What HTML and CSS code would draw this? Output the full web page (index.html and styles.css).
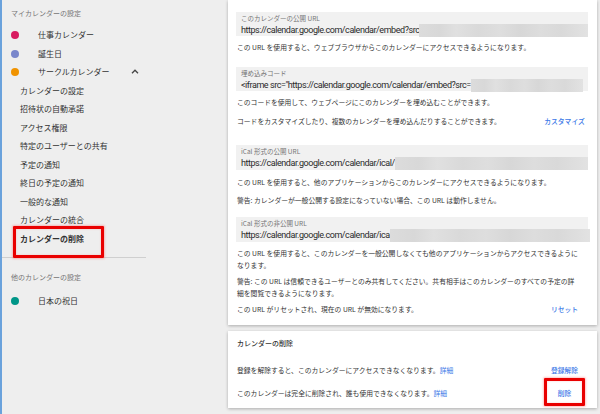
FILE: index.html
```html
<!DOCTYPE html>
<html lang="ja">
<head>
<meta charset="utf-8">
<title>カレンダーの設定</title>
<link rel="stylesheet" href="styles.css">
</head>
<body>
<div class="app">
  <aside class="sidebar">
    <div class="side-head">マイカレンダーの設定</div>
    <ul class="side-list">
      <li class="cal"><span class="dot pink"></span>仕事カレンダー</li>
      <li class="cal"><span class="dot purple"></span>誕生日</li>
      <li class="cal"><span class="dot orange"></span>サークルカレンダー<svg class="chev" width="8" height="5" viewBox="0 0 8 5"><path d="M1 4.2 L4 1.2 L7 4.2" fill="none" stroke="#444" stroke-width="1.3"/></svg></li>
      <li class="sub">カレンダーの設定</li>
      <li class="sub">招待状の自動承諾</li>
      <li class="sub">アクセス権限</li>
      <li class="sub">特定のユーザーとの共有</li>
      <li class="sub">予定の通知</li>
      <li class="sub">終日の予定の通知</li>
      <li class="sub">一般的な通知</li>
      <li class="sub">カレンダーの統合</li>
      <li class="sub current marked">カレンダーの削除</li>
    </ul>
    <hr class="divider">
    <div class="side-head second">他のカレンダーの設定</div>
    <ul class="side-list other">
      <li class="cal"><span class="dot teal"></span>日本の祝日</li>
    </ul>
  </aside>

  <main class="main">
    <section class="card card-urls">
      <div class="field f1">
        <div class="field-label">このカレンダーの公開 URL</div>
        <div class="field-value"><span class="url">https://calendar.google.com/calendar/embed?src</span><span class="blur"></span></div>
      </div>
      <p class="desc d1">この URL を使用すると、ウェブブラウザからこのカレンダーにアクセスできるようになります。</p>

      <div class="field f2">
        <div class="field-label">埋め込みコード</div>
        <div class="field-value"><span class="url">&lt;iframe src="https://calendar.google.com/calendar/embed?src=</span><span class="blur short"></span></div>
      </div>
      <p class="desc d2">このコードを使用して、ウェブページにこのカレンダーを埋め込むことができます。</p>
      <div class="row r1"><span class="desc-text">コードをカスタマイズしたり、複数のカレンダーを埋め込んだりすることができます。</span><span class="btn">カスタマイズ</span></div>

      <div class="field f3">
        <div class="field-label">iCal 形式の公開 URL</div>
        <div class="field-value"><span class="url">https://calendar.google.com/calendar/ical/</span><span class="blur"></span></div>
      </div>
      <p class="desc d3">この URL を使用すると、他のアプリケーションからこのカレンダーにアクセスできるようになります。</p>
      <p class="desc d4">警告: カレンダーが一般公開する設定になっていない場合、この URL は動作しません。</p>

      <div class="field f4">
        <div class="field-label">iCal 形式の非公開 URL</div>
        <div class="field-value"><span class="url">https://calendar.google.com/calendar/ica</span><span class="blur wide"></span></div>
      </div>
      <p class="desc multi d5">この URL を使用すると、このカレンダーを一般公開しなくても他のアプリケーションからアクセスできるように<br>なります。</p>
      <p class="desc multi d6">警告: この URL は信頼できるユーザーとのみ共有してください。共有相手はこのカレンダーのすべての予定の詳<br>細を閲覧できるようになります。</p>
      <div class="row r2"><span class="desc-text">この URL がリセットされ、現在の URL が無効になります。</span><span class="btn">リセット</span></div>
    </section>

    <section class="card card-delete">
      <h2 class="card-title">カレンダーの削除</h2>
      <div class="row r3"><span class="desc-text">登録を解除すると、このカレンダーにアクセスできなくなります。<a class="link">詳細</a></span><span class="btn">登録解除</span></div>
      <div class="row r4"><span class="desc-text">このカレンダーは完全に削除され、誰も使用できなくなります。<a class="link">詳細</a></span><span class="btn marked-btn">削除</span></div>
    </section>
  </main>
</div>
</body>
</html>
```

FILE: styles.css
```css
* { box-sizing: border-box; }

html, body {
  margin: 0;
  padding: 0;
  background: #eeeeee;
}

body {
  font-family: "Noto Sans CJK JP", "Noto Sans", sans-serif;
  color: #333333;
  width: 600px;
  height: 414px;
  overflow: hidden;
}

.app {
  display: flex;
  height: 414px;
}

/* ---------- Sidebar ---------- */
.sidebar {
  width: 228px;
  flex: 0 0 228px;
  border-left: 2px solid #6aa2dc;
  background: #eeeeee;
  height: 414px;
}

.side-head {
  font-size: 7px;
  line-height: 14px;
  color: #757575;
  padding: 6px 0 0 9px;
  height: 20px;
}

.side-head.second {
  padding-top: 0;
  height: 14px;
  margin-top: 12px;
}

.side-list {
  list-style: none;
  margin: 6px 0 0 0;
  padding: 0;
}

.side-list.other {
  margin-top: 8px;
}

.side-list li {
  font-size: 8px;
  line-height: 18.5px;
  height: 18.5px;
  color: #333333;
  white-space: nowrap;
}

.cal {
  display: flex;
  align-items: center;
  padding-left: 9px;
}

.dot {
  width: 8px;
  height: 8px;
  border-radius: 50%;
  margin-right: 19px;
  flex: 0 0 8px;
}
.dot.pink { background: #d81b60; }
.dot.purple { background: #7986cb; }
.dot.orange { background: #f09300; }
.dot.teal { background: #009688; }

.chev {
  margin-left: 21px;
  margin-top: -1px;
}

.sub {
  padding-left: 18px;
}

.sub.current {
  font-weight: 700;
}

.marked {
  position: relative;
}

.marked::after {
  content: "";
  position: absolute;
  left: 11px;
  top: -4px;
  width: 85px;
  height: 26px;
  border: 3px solid #e90000;
  border-radius: 1px;
  box-shadow: 0 0 2px 1px rgba(255, 90, 90, 0.35), inset 0 0 2px rgba(255, 90, 90, 0.35);
}

.divider {
  width: 144px;
  margin: 9px 0 0 0;
  border: 0;
  border-top: 1px solid #cfcfcf;
  height: 0;
}

/* ---------- Main ---------- */
.main {
  flex: 1;
  display: flex;
  flex-direction: column;
  gap: 6px;
  padding-right: 3px;
}

.card {
  background: #ffffff;
  box-shadow: 0 1px 3px rgba(0, 0, 0, 0.28);
  padding: 0 9px 0 8px;
}

.card-urls {
  padding-top: 12px;
  padding-bottom: 10px;
}

.card-delete {
  padding-top: 7px;
  padding-bottom: 9px;
}

.field {
  background: #f1f1f1;
  height: 24px;
  padding: 1px 0 0 5px;
}
.f3, .f4 { height: 25px; }

.field-label {
  font-size: 6.5px;
  line-height: 11px;
  color: #757575;
  white-space: nowrap;
}

.field-value {
  display: flex;
  align-items: center;
  height: 12px;
}

.url {
  font-family: Roboto, "Noto Sans CJK JP", sans-serif;
  font-size: 9px;
  letter-spacing: -0.45px;
  line-height: 12px;
  color: #2a2a2a;
  white-space: nowrap;
}

.blur {
  flex: 1;
  height: 13px;
  background: linear-gradient(90deg,
    #dcdcdc 0%, #d8d8d8 12%, #e0e0e0 22%, #d9d9d9 35%, #dedede 48%,
    #d7d7d7 60%, #dddddd 72%, #d9d9d9 84%, #e2e2e2 100%);
}
.blur.short { margin-right: 5px; }
.blur.wide { margin-right: -2px; }

.desc, .desc-text {
  font-size: 6.8px;
  line-height: 12px;
  color: #333333;
  white-space: nowrap;
}

.desc {
  margin: 0;
  padding-left: 1px;
}

.desc.multi { line-height: 11.5px; }

.d1 { margin-top: 5px; }
.f2 { margin-top: 14px; }
.d2 { margin-top: 5px; }
.r1 { margin-top: 7px; }
.f3 { margin-top: 18px; }
.d3 { margin-top: 6px; }
.d4 { margin-top: 6px; }
.f4 { margin-top: 11px; }
.d5 { margin-top: 6px; }
.d6 { margin-top: 5px; }
.r2 { margin-top: 4px; }

.row {
  display: flex;
  align-items: center;
  justify-content: space-between;
  height: 12px;
  padding-left: 1px;
  padding-right: 3px;
}

.btn {
  width: 41px;
  text-align: center;
  font-size: 6.8px;
  line-height: 12px;
  color: #3b78e7;
  font-weight: 500;
  white-space: nowrap;
}

.link {
  color: #3b78e7;
}

.card-title {
  margin: 0;
  padding-left: 1px;
  font-size: 7px;
  line-height: 10px;
  font-weight: 500;
  color: #333333;
}

.r3 { margin-top: 16px; }
.r4 { margin-top: 11px; }

.marked-btn {
  position: relative;
}

.marked-btn::after {
  content: "";
  position: absolute;
  left: 0;
  right: 0;
  top: -9px;
  bottom: -7px;
  border: 3px solid #e90000;
  border-radius: 1px;
  box-shadow: 0 0 2px 1px rgba(255, 90, 90, 0.35), inset 0 0 2px rgba(255, 90, 90, 0.35);
}
```
